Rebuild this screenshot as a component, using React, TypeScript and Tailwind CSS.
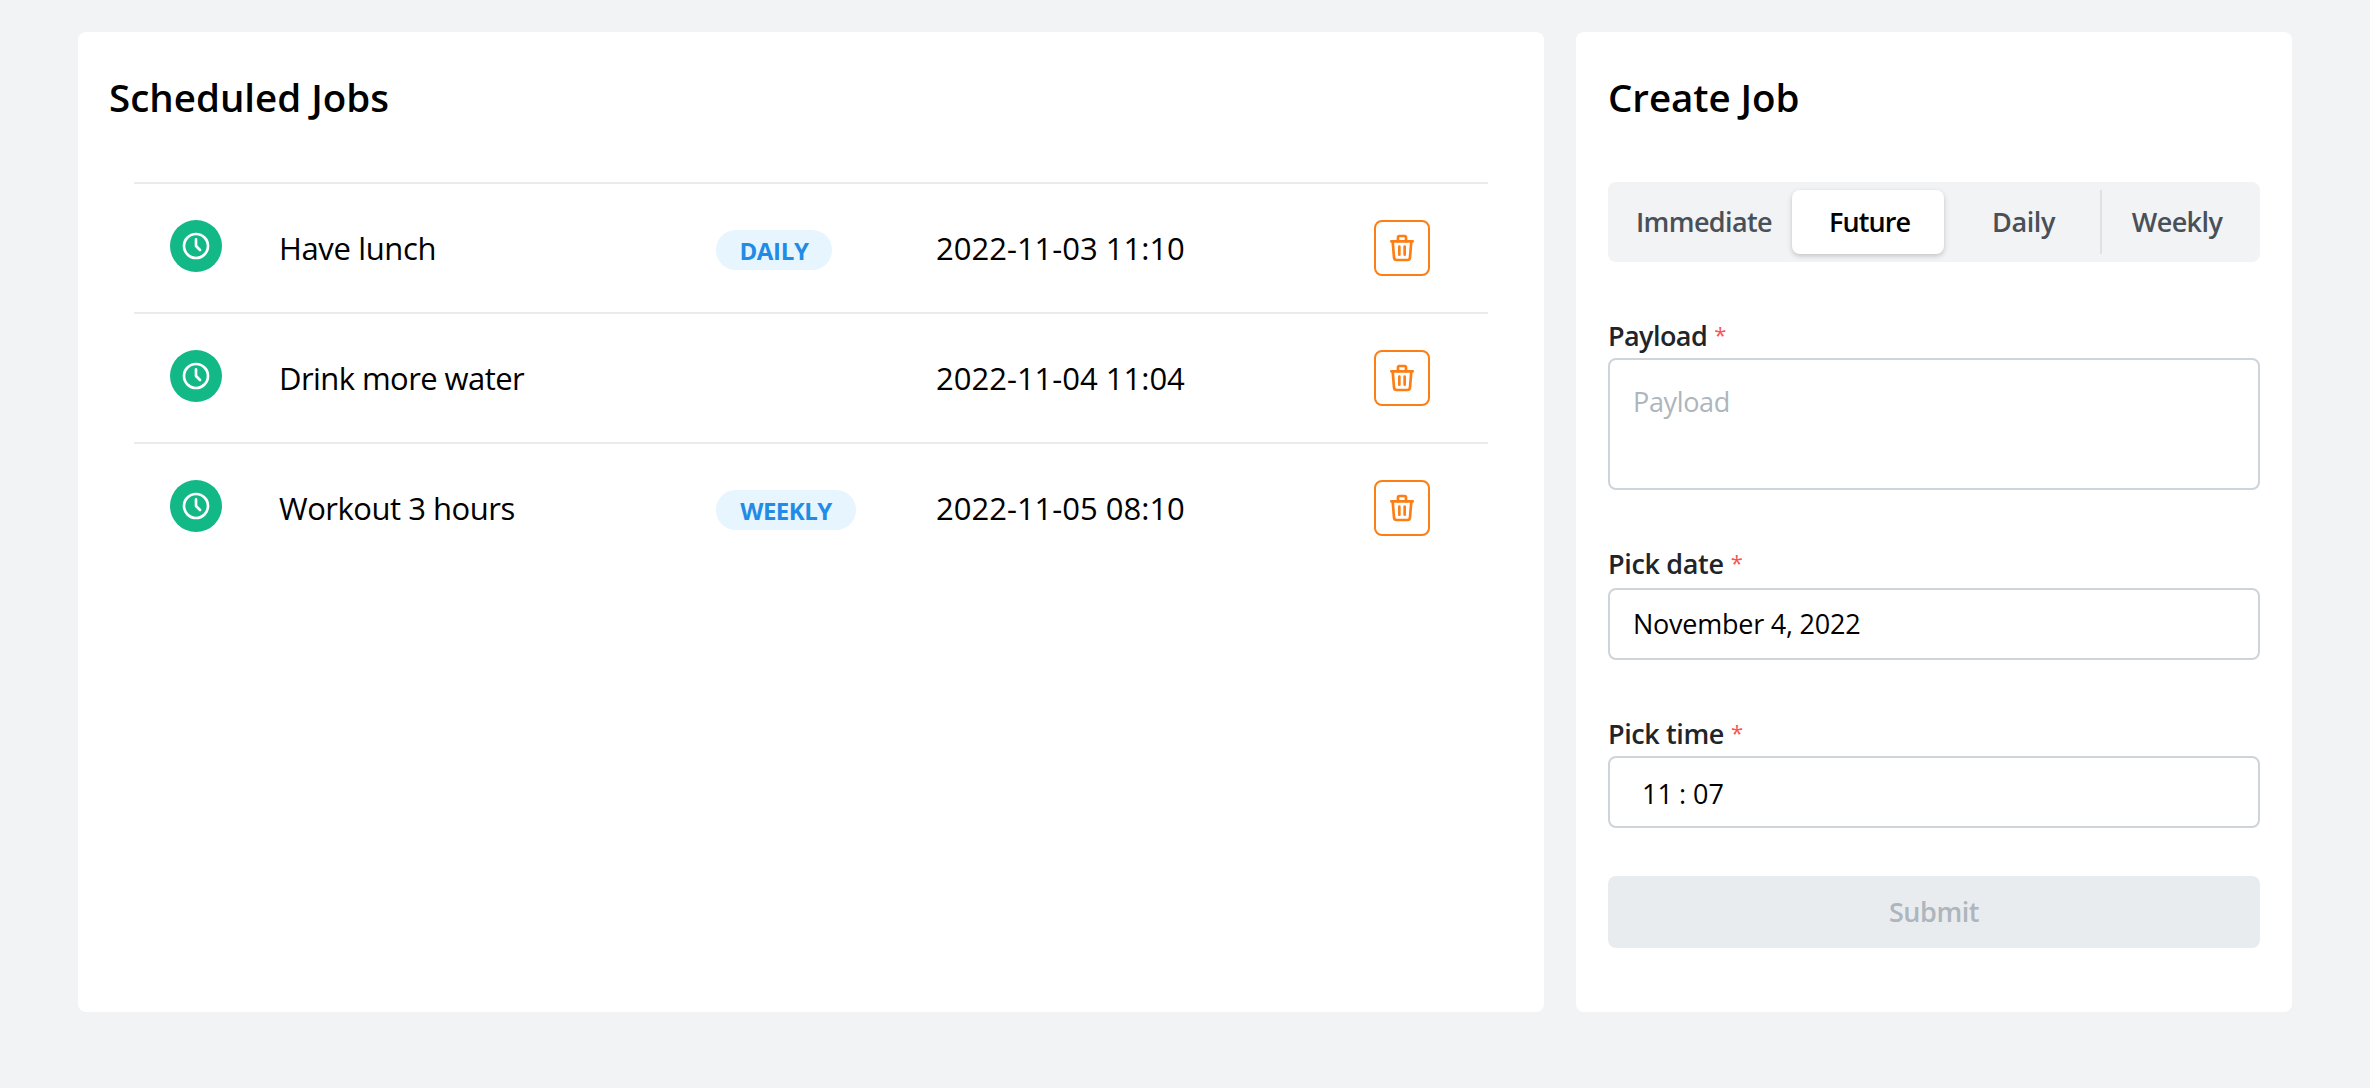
import type { ReactNode } from "react";

type Job = { name: string; nameClass: string; badge?: string; badgeClass?: string; time: string };

const jobs: Job[] = [
  { name: "Have lunch", nameClass: "tracking-[-0.36px]", badge: "DAILY", badgeClass: "w-[116px] tracking-[-0.33px]", time: "2022-11-03 11:10" },
  { name: "Drink more water", nameClass: "tracking-[-0.57px]", time: "2022-11-04 11:04" },
  { name: "Workout 3 hours", nameClass: "tracking-[-0.48px]", badge: "WEEKLY", badgeClass: "w-[140px] tracking-[-0.52px]", time: "2022-11-05 08:10" },
];

function ClockIcon() {
  return (
    <svg width="32" height="32" viewBox="0 0 24 24" fill="none" stroke="currentColor" strokeWidth="2" strokeLinecap="round" strokeLinejoin="round">
      <circle cx="12" cy="12" r="9" />
      <path d="M12 7v5l3 3" />
    </svg>
  );
}

function TrashIcon() {
  return (
    <svg width="32" height="32" viewBox="0 0 24 24" fill="none" stroke="currentColor" strokeWidth="2" strokeLinecap="round" strokeLinejoin="round">
      <path d="M4 7h16" />
      <path d="M10 11v6" />
      <path d="M14 11v6" />
      <path d="M5 7l1 12a2 2 0 0 0 2 2h8a2 2 0 0 0 2-2l1-12" />
      <path d="M9 7V4a1 1 0 0 1 1-1h4a1 1 0 0 1 1 1v3" />
    </svg>
  );
}

function JobRow({ job }: { job: Job }) {
  return (
    <li className="grid h-[130px] grid-cols-[109px_437px_220px_438px_56px] items-center border-t-2 border-[#e9ecef] pl-9">
      <span className="mb-1 flex size-[52px] items-center justify-center rounded-full bg-[#12b886] text-white">
        <ClockIcon />
      </span>
      <span className={`text-[31px] leading-[42px] ${job.nameClass}`}>{job.name}</span>
      <span>
        {job.badge && (
          <span className={`mt-1 block h-10 rounded-full bg-[#e7f5ff] pt-1 text-center text-[24px] leading-[33px] font-bold text-[#228be6] ${job.badgeClass}`}>
            {job.badge}
          </span>
        )}
      </span>
      <span className="text-[31px] leading-[42px]">{job.time}</span>
      <button aria-label="Delete job" className="flex size-14 items-center justify-center rounded-lg border-2 border-[#fd7e14] text-[#fd7e14]">
        <TrashIcon />
      </button>
    </li>
  );
}

function Label({ children, className }: { children: ReactNode; className: string }) {
  return (
    <div className="flex h-[45px] text-[27px] leading-[45px] font-semibold text-[#212529]">
      <span className={className}>{children}</span>
      <span className="ml-[7px] text-[22px] leading-[43px] font-normal text-[#fa5252]">*</span>
    </div>
  );
}

export default function App() {
  return (
    <div className="flex h-[1088px] w-[2370px] gap-8 bg-[#f1f3f5] pt-8 pl-[78px] font-['Open_Sans','Noto_Sans',sans-serif] text-black">
      <section className="h-[980px] w-[1466px] rounded-lg bg-white p-8">
        <h2 className="-ml-px pt-px text-[38.5px] leading-[64px] font-semibold">Scheduled Jobs</h2>
        <ul className="mx-6 mt-[53px]">
          {jobs.map((job) => (
            <JobRow key={job.name} job={job} />
          ))}
        </ul>
      </section>

      <section className="h-[980px] w-[716px] rounded-lg bg-white p-8">
        <h2 className="pt-px text-[38.5px] leading-[64px] font-semibold tracking-[-0.05px]">Create Job</h2>

        <div className="mt-[53px] flex h-20 rounded-lg bg-[#f1f3f5] p-2 text-center text-[27px] leading-[45px] font-semibold text-[#495057]">
          <div className="w-44 pt-[9px] tracking-[-0.62px]">Immediate</div>
          <div className="w-[152px] rounded-lg bg-white pt-[9px] pl-[3px] tracking-[-0.92px] text-black shadow-[0_2px_6px_rgba(0,0,0,0.1),0_2px_4px_rgba(0,0,0,0.1)]">Future</div>
          <div className="w-[158px] border-r-2 border-[#dee2e6] pt-[9px] pl-[3px] tracking-[-0.4px]">Daily</div>
          <div className="w-[150px] pt-[9px] tracking-[-0.6px]">Weekly</div>
        </div>

        <div className="mt-[51px]">
          <Label className="tracking-[-0.57px]">Payload</Label>
          <div className="h-[132px] rounded-lg border-2 border-[#ced4da] pt-[19px] pl-[23px] text-[27px] leading-[45px] tracking-[-0.35px] text-[#adb5bd]">Payload</div>
        </div>

        <div className="mt-[51px]">
          <Label className="tracking-[-0.34px]">Pick date</Label>
          <div className="mt-0.5 h-[72px] rounded-lg border-2 border-[#ced4da] pt-[11px] pl-[23px] text-[27px] leading-[45px] tracking-[-0.23px]">November 4, 2022</div>
        </div>

        <div className="mt-[51px]">
          <Label className="tracking-[-0.4px]">Pick time</Label>
          <div className="flex h-[72px] rounded-lg border-2 border-[#ced4da] pt-[13px] pl-8 text-[27px] leading-[45px]">
            <span className="w-[37px]">11</span>
            <span className="w-[14px]">:</span>
            <span>07</span>
          </div>
        </div>

        <button className="mt-12 block h-[72px] w-full rounded-lg bg-[#e9ecef] pb-px text-center text-[27px] leading-[45px] font-semibold tracking-[-0.45px] text-[#adb5bd]">Submit</button>
      </section>
    </div>
  );
}
